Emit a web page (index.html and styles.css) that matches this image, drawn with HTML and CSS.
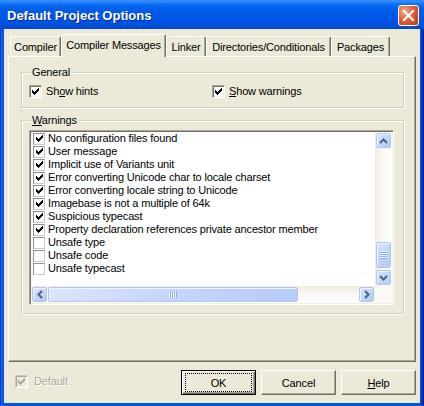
FILE: index.html
```html
<!DOCTYPE html>
<html>
<head>
<meta charset="utf-8">
<title>Default Project Options</title>
<link rel="stylesheet" href="styles.css">
</head>
<body>
<div class="window">
  <div class="titlebar">
    <span class="title">Default Project Options</span>
    <button class="close" aria-label="Close"><svg width="19" height="19" viewBox="0 0 19 19"><path d="M5 5L14 14M14 5L5 14" stroke="#fff" stroke-width="2.2" stroke-linecap="square"/></svg></button>
  </div>
  <div class="client">
    <div class="tabs">
      <div class="tab w-compiler">Compiler</div>
      <div class="tab active w-messages">Compiler Messages</div>
      <div class="tab w-linker">Linker</div>
      <div class="tab w-dirs">Directories/Conditionals</div>
      <div class="tab w-packages">Packages</div>
    </div>
    <div class="panel">
      <div class="group general">
        <div class="legend">General</div>
        <div class="opts">
          <label class="opt"><span class="cb"><svg width="7" height="7" viewBox="0 0 7 7"><path d="M0 2h1v3H0zM1 3h1v3H1zM2 4h1v3H2zM3 3h1v3H3zM4 2h1v3H4zM5 1h1v3H5zM6 0h1v3H6z"/></svg></span><span>Sh<u>o</u>w hints</span></label>
          <label class="opt"><span class="cb"><svg width="7" height="7" viewBox="0 0 7 7"><path d="M0 2h1v3H0zM1 3h1v3H1zM2 4h1v3H2zM3 3h1v3H3zM4 2h1v3H4zM5 1h1v3H5zM6 0h1v3H6z"/></svg></span><span><u>S</u>how warnings</span></label>
        </div>
      </div>
      <div class="group warnings">
        <div class="legend"><u>W</u>arnings</div>
        <div class="listbox">
          <div class="items">
            <div class="item"><span class="lcb"><svg width="7" height="7" viewBox="0 0 7 7"><path d="M0 2h1v3H0zM1 3h1v3H1zM2 4h1v3H2zM3 3h1v3H3zM4 2h1v3H4zM5 1h1v3H5zM6 0h1v3H6z"/></svg></span><span>No configuration files found</span></div>
            <div class="item"><span class="lcb"><svg width="7" height="7" viewBox="0 0 7 7"><path d="M0 2h1v3H0zM1 3h1v3H1zM2 4h1v3H2zM3 3h1v3H3zM4 2h1v3H4zM5 1h1v3H5zM6 0h1v3H6z"/></svg></span><span>User message</span></div>
            <div class="item"><span class="lcb"><svg width="7" height="7" viewBox="0 0 7 7"><path d="M0 2h1v3H0zM1 3h1v3H1zM2 4h1v3H2zM3 3h1v3H3zM4 2h1v3H4zM5 1h1v3H5zM6 0h1v3H6z"/></svg></span><span>Implicit use of Variants unit</span></div>
            <div class="item"><span class="lcb"><svg width="7" height="7" viewBox="0 0 7 7"><path d="M0 2h1v3H0zM1 3h1v3H1zM2 4h1v3H2zM3 3h1v3H3zM4 2h1v3H4zM5 1h1v3H5zM6 0h1v3H6z"/></svg></span><span>Error converting Unicode char to locale charset</span></div>
            <div class="item"><span class="lcb"><svg width="7" height="7" viewBox="0 0 7 7"><path d="M0 2h1v3H0zM1 3h1v3H1zM2 4h1v3H2zM3 3h1v3H3zM4 2h1v3H4zM5 1h1v3H5zM6 0h1v3H6z"/></svg></span><span>Error converting locale string to Unicode</span></div>
            <div class="item"><span class="lcb"><svg width="7" height="7" viewBox="0 0 7 7"><path d="M0 2h1v3H0zM1 3h1v3H1zM2 4h1v3H2zM3 3h1v3H3zM4 2h1v3H4zM5 1h1v3H5zM6 0h1v3H6z"/></svg></span><span>Imagebase is not a multiple of 64k</span></div>
            <div class="item"><span class="lcb"><svg width="7" height="7" viewBox="0 0 7 7"><path d="M0 2h1v3H0zM1 3h1v3H1zM2 4h1v3H2zM3 3h1v3H3zM4 2h1v3H4zM5 1h1v3H5zM6 0h1v3H6z"/></svg></span><span>Suspicious typecast</span></div>
            <div class="item"><span class="lcb"><svg width="7" height="7" viewBox="0 0 7 7"><path d="M0 2h1v3H0zM1 3h1v3H1zM2 4h1v3H2zM3 3h1v3H3zM4 2h1v3H4zM5 1h1v3H5zM6 0h1v3H6z"/></svg></span><span>Property declaration references private ancestor member</span></div>
            <div class="item"><span class="lcb"></span><span>Unsafe type</span></div>
            <div class="item"><span class="lcb"></span><span>Unsafe code</span></div>
            <div class="item"><span class="lcb"></span><span>Unsafe typecast</span></div>
          </div>
          <div class="vscroll">
            <div class="sbtn"><span class="face"><svg width="9" height="6" viewBox="0 0 9 6"><polyline points="1,5 4.5,1.5 8,5" fill="none" stroke="#4d6185" stroke-width="2"/></svg></span></div>
            <div class="vtrack"><div class="vthumb"><span class="face"><span class="grip-v"></span></span></div></div>
            <div class="sbtn"><span class="face"><svg width="9" height="6" viewBox="0 0 9 6"><polyline points="1,1 4.5,4.5 8,1" fill="none" stroke="#4d6185" stroke-width="2"/></svg></span></div>
          </div>
          <div class="hscroll">
            <div class="sbtn"><span class="face"><svg width="6" height="9" viewBox="0 0 6 9"><polyline points="5,1 1.5,4.5 5,8" fill="none" stroke="#4d6185" stroke-width="2"/></svg></span></div>
            <div class="htrack"><div class="hthumb"><span class="face"><span class="grip-h"></span></span></div></div>
            <div class="sbtn"><span class="face"><svg width="6" height="9" viewBox="0 0 6 9"><polyline points="1,1 4.5,4.5 1,8" fill="none" stroke="#4d6185" stroke-width="2"/></svg></span></div>
          </div>
          <div class="corner"></div>
        </div>
      </div>
    </div>
    <div class="footer">
      <label class="opt disabled"><span class="cb"><svg width="7" height="7" viewBox="0 0 7 7"><path d="M0 2h1v3H0zM1 3h1v3H1zM2 4h1v3H2zM3 3h1v3H3zM4 2h1v3H4zM5 1h1v3H5zM6 0h1v3H6z"/></svg></span><span>Default</span></label>
      <div class="buttons">
        <button class="btn default"><span class="focus">OK</span></button>
        <button class="btn">Cancel</button>
        <button class="btn"><span><u>H</u>elp</span></button>
      </div>
    </div>
  </div>
</div>
</body>
</html>
```
FILE: styles.css
```css
* { box-sizing: border-box; }
html, body { margin: 0; padding: 0; }
body {
  width: 424px;
  height: 406px;
  overflow: hidden;
  font-family: "Liberation Sans", Arial, sans-serif;
  font-size: 11px;
  color: #000;
  background: #0855dd;
}
u { text-decoration: underline; text-underline-offset: 1px; }

.window {
  width: 424px;
  height: 406px;
  display: flex;
  flex-direction: column;
  background: linear-gradient(to right, #0831d9 0, #0831d9 1px, #166aee 1px, #166aee 2px, #0855dd 2px, #0855dd 421px, #0742c8 421px, #001ea0 424px);
}

.titlebar {
  flex: none;
  height: 29px;
  display: flex;
  align-items: center;
  padding: 0 5px 0 7px;
  background: linear-gradient(to bottom, #3d8ef9 0px, #2a86ff 2px, #0f6ff5 4px, #0260ec 8px, #0057e6 14px, #0054e3 22px, #004fdc 26px, #0046d0 29px);
}
.title {
  flex: 1;
  font-weight: bold;
  font-size: 13px;
  color: #fff;
  text-shadow: 1px 1px 0 #0a2a8c;
  padding-top: 1px;
}
.close {
  width: 21px;
  height: 21px;
  margin-top: 2px;
  padding: 0;
  border: 1px solid #fff;
  border-radius: 3px;
  background: radial-gradient(circle at 30% 28%, #f3ad92 0%, #e5683f 40%, #d1461e 75%, #c13a14 100%);
  display: flex;
  align-items: center;
  justify-content: center;
}

.client {
  flex: 1;
  margin: 0 4px 3px;
  background: #ece9d8;
  padding: 5px 4px 0;
  display: flex;
  flex-direction: column;
}

.tabs {
  flex: none;
  height: 22px;
  display: flex;
  align-items: flex-end;
  padding-left: 2px;
  position: relative;
  z-index: 1;
}
.tab {
  height: 20px;
  display: flex;
  align-items: center;
  justify-content: center;
  white-space: nowrap;
  letter-spacing: -0.15px;
  background: #ece9d8;
  border-top: 1px solid #fff;
  border-left: 1px solid #fff;
  border-right: 1px solid #716f64;
  box-shadow: inset -1px 0 0 #aca899;
  border-radius: 2px 2px 0 0;
}
.tab.active {
  height: 23px;
  margin-bottom: -1px;
  padding-bottom: 3px;
}
.w-compiler { width: 51px; }
.w-messages { width: 105px; }
.w-linker { width: 40px; }
.w-dirs { width: 125px; }
.w-packages { width: 59px; }

.panel {
  flex: none;
  height: 306px;
  border: 1px solid;
  border-color: #fff #716f64 #716f64 #fff;
  box-shadow: inset -1px -1px 0 #aca899;
  display: flex;
  flex-direction: column;
}

.group {
  border: 1px solid #d0d0bf;
  box-shadow: inset 1px 1px 0 #fff, 1px 1px 0 #fff;
  margin: 0 11px 0 12px;
  padding: 0 9px 8px 7px;
}
.general { margin-top: 15px; padding-bottom: 9px; }
.warnings { margin-top: 12px; }
.legend {
  display: table;
  margin: -7px 0 0 1px;
  padding: 0 2px;
  height: 13px;
  line-height: 13px;
  background: #ece9d8;
  letter-spacing: -0.15px;
}

.opts {
  display: grid;
  grid-template-columns: 183px 1fr;
  margin-top: 6px;
}
.opt {
  display: flex;
  align-items: center;
  gap: 4px;
  height: 13px;
  line-height: 13px;
  letter-spacing: -0.15px;
  white-space: nowrap;
}
.cb {
  flex: none;
  width: 13px;
  height: 13px;
  border: 1px solid;
  border-color: #aca899 #fff #fff #aca899;
  box-shadow: inset 1px 1px 0 #716f64, inset -1px -1px 0 #f1efe2;
  background: #fff;
  display: flex;
  align-items: center;
  justify-content: center;
}
.cb svg, .lcb svg { fill: #000; shape-rendering: crispEdges; }

.listbox {
  height: 175px;
  margin-top: 3px;
  border: 1px solid;
  border-color: #aca899 #fff #fff #aca899;
  box-shadow: inset 1px 1px 0 #716f64, inset -1px -1px 0 #f1efe2;
  padding: 1px;
  background: #fff;
  display: grid;
  grid-template-columns: 1fr 17px;
  grid-template-rows: 1fr 17px;
}
.items {
  overflow: hidden;
  padding-left: 2px;
}
.item {
  height: 13px;
  line-height: 13px;
  display: flex;
  align-items: center;
  gap: 3px;
  white-space: nowrap;
  letter-spacing: -0.15px;
}
.lcb {
  flex: none;
  width: 12px;
  height: 12px;
  border: 1px solid;
  border-color: #8f8f8f #c9c9c9 #c9c9c9 #8f8f8f;
  background: #fff;
  display: flex;
  align-items: center;
  justify-content: center;
}

.vscroll {
  display: flex;
  flex-direction: column;
  background: linear-gradient(to right, #f2ebe1, #fbf9f6 50%, #fefefe);
}
.hscroll {
  display: flex;
  background: linear-gradient(to bottom, #f2ebe1, #fbf9f6 50%, #fefefe);
}
.corner { background: #faf9f5; }
.sbtn {
  flex: none;
  width: 17px;
  height: 17px;
  padding: 1px;
}
.face {
  display: flex;
  align-items: center;
  justify-content: center;
  width: 100%;
  height: 100%;
  border: 1px solid #b2c6f4;
  border-radius: 2px;
  background: linear-gradient(135deg, #dce6fe 0%, #c6d6fc 45%, #b7cbf8 100%);
  box-shadow: inset 1px 1px 0 #eef3fe;
}
.vtrack {
  flex: 1;
  display: flex;
  flex-direction: column;
}
.vthumb {
  margin-top: auto;
  margin-bottom: 1px;
  height: 26px;
  padding: 0 1px;
}
.htrack {
  flex: 1;
  display: flex;
}
.hthumb {
  width: 250px;
  padding: 1px 0;
}
.grip-v {
  width: 7px;
  height: 8px;
  background: repeating-linear-gradient(to bottom, #eef4ff 0 1px, #8eaef2 1px 2px);
}
.grip-h {
  width: 8px;
  height: 7px;
  background: repeating-linear-gradient(to right, #eef4ff 0 1px, #8eaef2 1px 2px);
}

.footer {
  flex: 1;
  display: flex;
  align-items: flex-start;
  padding: 8px 0 0 7px;
}
.footer .opt { margin-top: 5px; gap: 6px; }
.opt.disabled { color: #aca899; text-shadow: 1px 1px 0 #fff; }
.opt.disabled .cb {
  background: #ece9d8;
  border-color: #cac8bb #fff #fff #cac8bb;
  box-shadow: inset 1px 1px 0 #aca899, inset -1px -1px 0 #f1efe2;
}
.opt.disabled .cb svg { fill: #aca899; }

.buttons {
  margin-left: auto;
  display: flex;
  gap: 5px;
}
.btn {
  width: 75px;
  height: 25px;
  padding: 0;
  font-family: "Liberation Sans", Arial, sans-serif;
  font-size: 11px;
  letter-spacing: -0.1px;
  color: #000;
  background: #ece9d8;
  border: 1px solid;
  border-color: #fff #716f64 #716f64 #fff;
  box-shadow: inset -1px -1px 0 #aca899;
  display: flex;
  align-items: center;
  justify-content: center;
}
.btn.default {
  border-color: #000;
  box-shadow: inset 1px 1px 0 #fff, inset -1px -1px 0 #716f64, inset -2px -2px 0 #aca899;
  align-items: stretch;
}
.focus {
  flex: 1;
  margin: 2px 3px;
  border: 1px dotted #000;
  display: flex;
  align-items: center;
  justify-content: center;
}
```
